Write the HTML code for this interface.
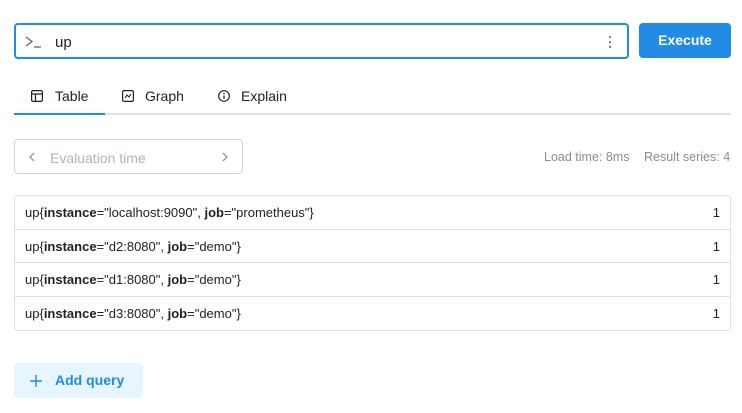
<!DOCTYPE html>
<html><head><style>
*{box-sizing:border-box;margin:0;padding:0}
body{width:742px;height:413px;background:#fff;font-family:"Liberation Sans",sans-serif;color:#222;position:relative;overflow:hidden}
.abs{position:absolute}
#inp{left:14px;top:23px;width:615px;height:36px;border:2px solid #228be6;border-radius:4px}
#exe{left:639px;top:23px;width:92px;height:35px;background:#228be6;border-radius:4px;color:#fff;font-size:14px;font-weight:bold;text-align:center;line-height:35px}
.tab{top:88px;font-size:14px;color:#222}
#line{left:14px;top:113px;width:717px;height:2px;background:#dee2e6}
#act{left:14px;top:113px;width:91px;height:2px;background:#228be6}
#ev{left:14px;top:139px;width:229px;height:35px;border:1px solid #ced4da;border-radius:4px;color:#adb5bd;font-size:14px}
#tbl{left:14px;top:195px;width:717px;height:136px;border:1px solid #dee2e6;border-radius:4px}
.row{height:33.5px;border-bottom:1px solid #dee2e6;font-size:13px;line-height:33px;padding:0 10px;display:flex;justify-content:space-between}
.row:last-child{border-bottom:none}
#add{left:14px;top:363px;width:129px;height:35px;background:#e7f5ff;border-radius:4px;color:#228be6;font-size:14px;font-weight:bold;line-height:35px}
</style></head><body>
<div id="inp" class="abs">
<svg class="abs" style="left:8px;top:9px" width="20" height="16" viewBox="0 0 20 16"><path d="M2 3l6 4.5-6 4.5" fill="none" stroke="#666" stroke-width="1.3"/><path d="M10 13h7" stroke="#666" stroke-width="1.3"/></svg>
<span class="abs" style="left:39px;top:9px;font-size:15px">up</span>
<svg class="abs" style="left:592px;top:10px" width="4" height="14"><circle cx="2" cy="2" r="1.1" fill="#777"/><circle cx="2" cy="7" r="1.1" fill="#777"/><circle cx="2" cy="12" r="1.1" fill="#777"/></svg>
</div>
<div id="exe" class="abs">Execute</div>
<svg class="abs" style="left:31px;top:90px" width="12" height="12"><rect x="0.6" y="0.6" width="10.8" height="10.8" rx="1.5" fill="none" stroke="#222" stroke-width="1.2"/><path d="M0.6 4h10.8M4.5 4v7.4" stroke="#222" stroke-width="1.2"/></svg>
<span class="abs tab" style="left:55px">Table</span>
<svg class="abs" style="left:122px;top:90px" width="12" height="12"><rect x="0.6" y="0.6" width="10.8" height="10.8" rx="1.5" fill="none" stroke="#222" stroke-width="1.2"/><path d="M3 8l2-3 2 2 2-3" fill="none" stroke="#222" stroke-width="1.1"/></svg>
<span class="abs tab" style="left:145px">Graph</span>
<svg class="abs" style="left:218px;top:90px" width="12" height="12"><circle cx="6" cy="6" r="5.3" fill="none" stroke="#222" stroke-width="1.2"/><path d="M6 5.5v3.3" stroke="#222" stroke-width="1.3"/><circle cx="6" cy="3.6" r="0.8" fill="#222"/></svg>
<span class="abs tab" style="left:241px">Explain</span>
<div id="line" class="abs"></div><div id="act" class="abs"></div>
<div id="ev" class="abs">
<svg class="abs" style="left:13px;top:12px" width="8" height="10"><path d="M6 1L2 5l4 4" fill="none" stroke="#999" stroke-width="1.3"/></svg>
<span class="abs" style="left:35px;top:10px">Evaluation time</span>
<svg class="abs" style="left:206px;top:12px" width="8" height="10"><path d="M2 1l4 4-4 4" fill="none" stroke="#999" stroke-width="1.3"/></svg>
</div>
<span class="abs" style="left:544px;top:150px;font-size:12.5px;color:#868e96">Load time: 8ms</span>
<span class="abs" style="left:644px;top:150px;font-size:12.5px;color:#868e96">Result series: 4</span>
<div id="tbl" class="abs">
<div class="row"><span>up{<b>instance</b>="localhost:9090", <b>job</b>="prometheus"}</span><span>1</span></div>
<div class="row"><span>up{<b>instance</b>="d2:8080", <b>job</b>="demo"}</span><span>1</span></div>
<div class="row"><span>up{<b>instance</b>="d1:8080", <b>job</b>="demo"}</span><span>1</span></div>
<div class="row"><span>up{<b>instance</b>="d3:8080", <b>job</b>="demo"}</span><span>1</span></div>
</div>
<div id="add" class="abs">
<svg class="abs" style="left:16px;top:12px" width="12" height="12"><path d="M6 0v12M0 6h12" stroke="#228be6" stroke-width="1.4"/></svg>
<span class="abs" style="left:41px;top:0">Add query</span>
</div>
</body></html>
